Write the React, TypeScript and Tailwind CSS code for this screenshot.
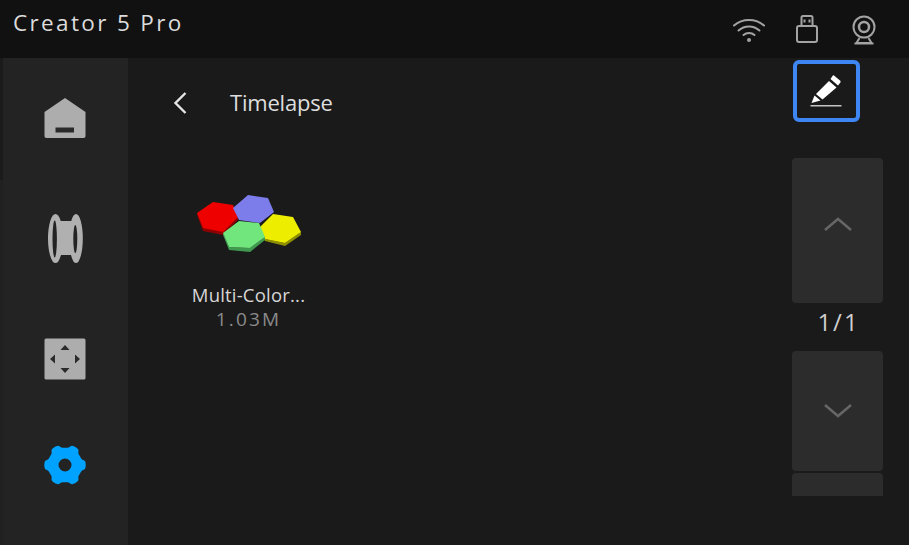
import React from 'react';

const font = { fontFamily: '"Open Sans", sans-serif' };

// six wide rounded lobes, one pointing left and one pointing right
const gearOutline = Array.from({ length: 240 }, (_, i) => {
  const a = (i / 240) * Math.PI * 2;
  const r = 19 + 1.7 * (Math.tanh(2.2 * Math.cos(6 * a)) / Math.tanh(2.2));
  return `${i === 0 ? 'M' : 'L'}${(21 + r * Math.cos(a)).toFixed(2)} ${(20 + r * Math.sin(a)).toFixed(2)}`;
}).join('') + 'Z';

const WifiIcon = () => (
  <svg width="34" height="28" viewBox="0 0 34 28" fill="none" stroke="#a3a3a3" strokeWidth="2" strokeLinecap="round">
    <path d="M2 9.5C10.5 2 23.5 2 32 9.5" />
    <path d="M6.5 14.5C12.5 9 21.5 9 27.5 14.5" />
    <path d="M11.5 19C14.5 16.2 19.5 16.2 22.5 19" />
    <circle cx="17" cy="24" r="2" fill="#a3a3a3" stroke="none" />
  </svg>
);

const UsbIcon = () => (
  <svg width="24" height="30" viewBox="0 0 24 30" fill="none" stroke="#a3a3a3" strokeWidth="2">
    <rect x="2" y="11" width="20" height="16" rx="2" />
    <path d="M6.5 11V2.5C6.5 1.5 7 1 8 1H16C17 1 17.5 1.5 17.5 2.5V11" />
    <rect x="8.5" y="4.5" width="2" height="3" fill="#a3a3a3" stroke="none" />
    <rect x="13.5" y="4.5" width="2" height="3" fill="#a3a3a3" stroke="none" />
  </svg>
);

const CameraIcon = () => (
  <svg width="26" height="30" viewBox="0 0 26 30" fill="none" stroke="#a3a3a3" strokeWidth="2">
    <circle cx="13" cy="12" r="10.5" />
    <circle cx="13" cy="12" r="5" strokeWidth="2.5" />
    <path d="M8.5 23L5.5 28H20.5L17.5 23" />
    <path d="M3.5 28.5H22.5" />
  </svg>
);

const HomeIcon = () => (
  <svg width="42" height="42" viewBox="0 0 42 42">
    <path d="M21 1L41.5 15V39C41.5 40.3 40.8 41 39.5 41H2.5C1.2 41 0.5 40.3 0.5 39V15Z" fill="#adadad" />
    <rect x="11.5" y="30.5" width="18.5" height="5" fill="#2a2a2a" />
  </svg>
);

const SpoolIcon = () => (
  <svg width="36" height="50" viewBox="0 0 36 50">
    <rect x="9" y="7" width="18" height="34" fill="#b0b0b0" />
    <ellipse cx="8.5" cy="24.5" rx="7.5" ry="24.5" fill="#b0b0b0" />
    <ellipse cx="7.7" cy="25" rx="2.2" ry="18.5" fill="#232323" />
    <ellipse cx="29" cy="24.5" rx="6.8" ry="24.5" fill="#b0b0b0" />
    <ellipse cx="28.3" cy="25" rx="2" ry="14" fill="#232323" />
  </svg>
);

const MoveIcon = () => (
  <svg width="42" height="42" viewBox="0 0 42 42">
    <rect x="0.5" y="0.5" width="41" height="41" rx="1.5" fill="#adadad" />
    <path d="M21 7L25.5 12H16.5Z" fill="#2a2a2a" />
    <path d="M21 35L16.5 30H25.5Z" fill="#2a2a2a" />
    <path d="M6 21L11 16.5V25.5Z" fill="#2a2a2a" />
    <path d="M36 21L31 25.5V16.5Z" fill="#2a2a2a" />
  </svg>
);

const GearIcon = () => (
  <svg width="42" height="40" viewBox="0 0 42 40">
    <path fillRule="evenodd" fill="#00a2ff" d={`${gearOutline}M21 13.5A6.5 6.5 0 1 0 21 26.5A6.5 6.5 0 1 0 21 13.5Z`} />
  </svg>
);

const PencilIcon = () => (
  <svg width="32" height="34" viewBox="0 0 32 34">
    <path d="M24 1.5L30 6.5C30.8 7.2 30.8 8 30.2 8.7L28 11.5L20.5 5L22.5 2C23 1.2 23.5 1.2 24 1.5Z" fill="#fff" />
    <path d="M19 7L26.5 13.5L12.5 25.5L6 20Z" fill="#fff" />
    <path d="M4.5 21.5L10.5 26.5L1.5 29Z" fill="#fff" />
    <rect x="0.5" y="31" width="31" height="1.5" fill="#c4c4c4" />
  </svg>
);

const HexThumb = () => (
  <svg width="120" height="70" viewBox="190 190 120 70">
    <polygon points="197,213 197,215 203,231 223,235 238,220 238,217 203,228" fill="#8f0000" />
    <polygon points="197,213 213,202 233,205 238,217 223,232 203,228" fill="#ee0000" />
    <polygon points="233,208 248,195 268,198 274,212 260,223 239,220" fill="#7c7ceb" />
    <polygon points="260,227 260,229 265,241 285,246 301,235 301,232 285,243 265,239" fill="#8f8f00" />
    <polygon points="260,227 273,214 293,217 301,232 285,243 265,239" fill="#eded00" />
    <polygon points="223,233 223,235 229,250 250,252 265,240 265,237 250,248 229,247" fill="#3f9a4f" />
    <polygon points="223,233 239,221 259,223 265,237 250,248 229,247" fill="#70e67c" />
  </svg>
);

const Chevron = ({ up }: { up?: boolean }) => (
  <svg width="30" height="16" viewBox="0 0 30 16" fill="none" stroke="#666" strokeWidth="2.5">
    <path d={up ? 'M2 14L15 3L28 14' : 'M2 2L15 13L28 2'} />
  </svg>
);

export default function App() {
  return (
    <div className="w-[909px] h-[545px] flex flex-col overflow-hidden bg-[#1a1a1a]" style={font}>
      <header className="h-[58px] flex items-start justify-between bg-[#111111]">
        <h1 className="ml-[13px] mt-[8px] text-[22.5px] leading-[30px] tracking-[2.35px] text-[#dcdcdc]">Creator 5 Pro</h1>
        <div className="flex items-center mt-[15px] mr-[32px]">
          <WifiIcon />
          <div className="ml-[29px]"><UsbIcon /></div>
          <div className="ml-[32px]"><CameraIcon /></div>
        </div>
      </header>

      <div className="flex-1 flex">
        <nav className="w-[128px] flex">
          <div className="w-[3px] flex flex-col">
            <div className="h-[122px] bg-[#1b1b1b]" />
            <div className="flex-1 bg-[#202020]" />
          </div>
          <div className="flex-1 bg-[#232323] flex flex-col items-center pr-[2px]">
            <div className="mt-[39px] h-[42px]"><HomeIcon /></div>
            <div className="mt-[75px] h-[50px]"><SpoolIcon /></div>
            <div className="mt-[74px] h-[42px]"><MoveIcon /></div>
            <div className="mt-[65px]"><GearIcon /></div>
          </div>
        </nav>

        <main className="flex-1 flex">
          <div className="flex-1">
            <div className="flex items-center h-[30px] mt-[30px] ml-[45px]">
              <svg width="14" height="24" viewBox="0 0 14 24" fill="none" stroke="#e5e5e5" strokeWidth="2.4">
                <path d="M12.5 2L2.5 12L12.5 22" />
              </svg>
              <span className="ml-[43px] -mt-[2px] text-[22px] tracking-[-0.2px] text-[#dedede]">Timelapse</span>
            </div>
            <div className="mt-[72px] ml-[62px] w-[120px] flex flex-col items-center">
              <HexThumb />
              <span className="mt-[22px] -ml-[3px] text-[18.5px] leading-[25px] tracking-[0.2px] whitespace-nowrap text-[#d6d6d6]">Multi-Color...</span>
              <span className="-ml-[3px] text-[19px] leading-[25px] tracking-[2.2px] text-[#8a8a8a]">1.03M</span>
            </div>
          </div>

          <div className="w-[91px] mr-[26px] flex flex-col">
            <button className="mt-[2px] ml-[1px] w-[67px] h-[62px] pr-[2px] rounded-[6px] border-[4px] border-[#3f86f5] flex items-center justify-center">
              <PencilIcon />
            </button>
            <button className="mt-[36px] h-[145px] pb-[13px] rounded-[4px] bg-[#2c2c2c] flex items-center justify-center">
              <Chevron up />
            </button>
            <div className="h-[48px] flex items-center justify-center pl-[2px] pb-[10px] text-[24px] tracking-[2px] text-[#cfcfcf]">1/1</div>
            <button className="h-[120px] rounded-[4px] bg-[#2c2c2c] flex items-center justify-center">
              <Chevron />
            </button>
            <div className="mt-[2px] h-[23px] rounded-t-[4px] bg-[#2c2c2c]" />
          </div>
        </main>
      </div>
    </div>
  );
}
